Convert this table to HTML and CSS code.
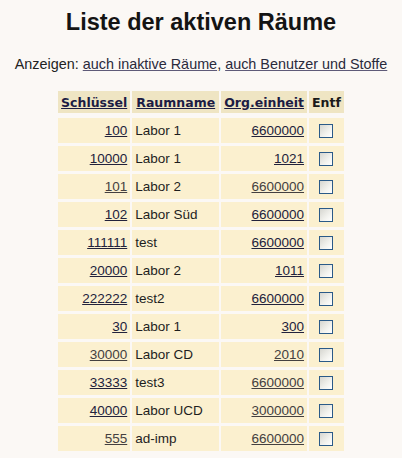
FILE: index.html
```html
<!DOCTYPE html>
<html lang="de">
<head>
<meta charset="utf-8">
<title>Liste der aktiven Räume</title>
<link rel="stylesheet" href="styles.css">
</head>
<body>
<h1 class="title">Liste der aktiven Räume</h1>
<p class="show">Anzeigen: <a href="#" class="lnk">auch inaktive Räume</a>, <a href="#" class="lnk">auch Benutzer und Stoffe</a></p>
<table class="rooms">
  <thead>
    <tr>
      <th class="c1"><a href="#" class="hl">Schlüssel</a></th>
      <th class="c2"><a href="#" class="hl">Raumname</a></th>
      <th class="c3"><a href="#" class="hl">Org.einheit</a></th>
      <th class="c4">Entf</th>
    </tr>
  </thead>
  <tbody>
    <tr><td class="num"><a href="#" class="dl">100</a></td><td class="name">Labor 1</td><td class="num"><a href="#" class="dl">6600000</a></td><td class="chk"><input type="checkbox" class="cb"></td></tr>
    <tr><td class="num"><a href="#" class="dl">10000</a></td><td class="name">Labor 1</td><td class="num"><a href="#" class="dl">1021</a></td><td class="chk"><input type="checkbox" class="cb"></td></tr>
    <tr><td class="num"><a href="#" class="dl vis">101</a></td><td class="name">Labor 2</td><td class="num"><a href="#" class="dl vis">6600000</a></td><td class="chk"><input type="checkbox" class="cb"></td></tr>
    <tr><td class="num"><a href="#" class="dl">102</a></td><td class="name">Labor Süd</td><td class="num"><a href="#" class="dl">6600000</a></td><td class="chk"><input type="checkbox" class="cb"></td></tr>
    <tr><td class="num"><a href="#" class="dl">111111</a></td><td class="name">test</td><td class="num"><a href="#" class="dl">6600000</a></td><td class="chk"><input type="checkbox" class="cb"></td></tr>
    <tr><td class="num"><a href="#" class="dl">20000</a></td><td class="name">Labor 2</td><td class="num"><a href="#" class="dl">1011</a></td><td class="chk"><input type="checkbox" class="cb"></td></tr>
    <tr><td class="num"><a href="#" class="dl">222222</a></td><td class="name">test2</td><td class="num"><a href="#" class="dl">6600000</a></td><td class="chk"><input type="checkbox" class="cb"></td></tr>
    <tr><td class="num"><a href="#" class="dl">30</a></td><td class="name">Labor 1</td><td class="num"><a href="#" class="dl">300</a></td><td class="chk"><input type="checkbox" class="cb"></td></tr>
    <tr><td class="num"><a href="#" class="dl vis">30000</a></td><td class="name">Labor CD</td><td class="num"><a href="#" class="dl vis">2010</a></td><td class="chk"><input type="checkbox" class="cb"></td></tr>
    <tr><td class="num"><a href="#" class="dl">33333</a></td><td class="name">test3</td><td class="num"><a href="#" class="dl vis">6600000</a></td><td class="chk"><input type="checkbox" class="cb"></td></tr>
    <tr><td class="num"><a href="#" class="dl">40000</a></td><td class="name">Labor UCD</td><td class="num"><a href="#" class="dl vis">3000000</a></td><td class="chk"><input type="checkbox" class="cb"></td></tr>
    <tr><td class="num"><a href="#" class="dl vis">555</a></td><td class="name">ad-imp</td><td class="num"><a href="#" class="dl vis">6600000</a></td><td class="chk"><input type="checkbox" class="cb"></td></tr>
  </tbody>
</table>
</body>
</html>
```

FILE: styles.css
```css
html, body {
  margin: 0;
  padding: 0;
  background: #fbf8f5;
  color: #1e1e1e;
  font-family: "Liberation Sans", Arial, sans-serif;
}

.title {
  margin: 9px 0 0;
  font-size: 23.5px;
  line-height: 27px;
  font-weight: bold;
  text-align: center;
  color: #141414;
}

.show {
  margin: 20px 0 0;
  font-size: 14.4px;
  line-height: 17px;
  text-align: center;
  color: #222;
}

.lnk {
  color: #2a2a3c;
  text-decoration: underline;
  text-decoration-color: #5e5a78;
}

.rooms {
  margin: 15px auto 0;
  border-collapse: separate;
  border-spacing: 2px 3px;
  table-layout: fixed;
}

.rooms th {
  box-sizing: border-box;
  height: 24px;
  padding: 0 3px;
  background: #efe5c3;
  background-clip: padding-box;
  border-bottom: 2px solid transparent;
  font-family: "DejaVu Sans", Verdana, sans-serif;
  font-size: 12.5px;
  font-weight: bold;
  text-align: center;
  vertical-align: middle;
  color: #1a1a1a;
  white-space: nowrap;
}

.c1 { width: 72px; }
.c2 { width: 87px; }
.c3 { width: 84px; }
.c4 { width: 32px; }

.hl {
  color: #1c1c44;
  text-decoration: underline;
}

.rooms td {
  box-sizing: border-box;
  height: 25px;
  padding: 0 3px;
  background: #fbf0cf;
  font-size: 13.5px;
  vertical-align: middle;
  white-space: nowrap;
}

.num { text-align: right; }
.name { text-align: left; color: #1e1e1e; }
.chk { text-align: center; }

.dl {
  color: #22223c;
  text-decoration: underline;
}

.dl.vis {
  color: #444040;
}

.cb {
  -webkit-appearance: none;
  appearance: none;
  display: block;
  margin: 0 auto;
  width: 14px;
  height: 14px;
  border: 1px solid #2a5a88;
  background: linear-gradient(135deg, #d6d6d0 0%, #f2f2ee 60%, #ffffff 100%);
  box-sizing: border-box;
}
```
